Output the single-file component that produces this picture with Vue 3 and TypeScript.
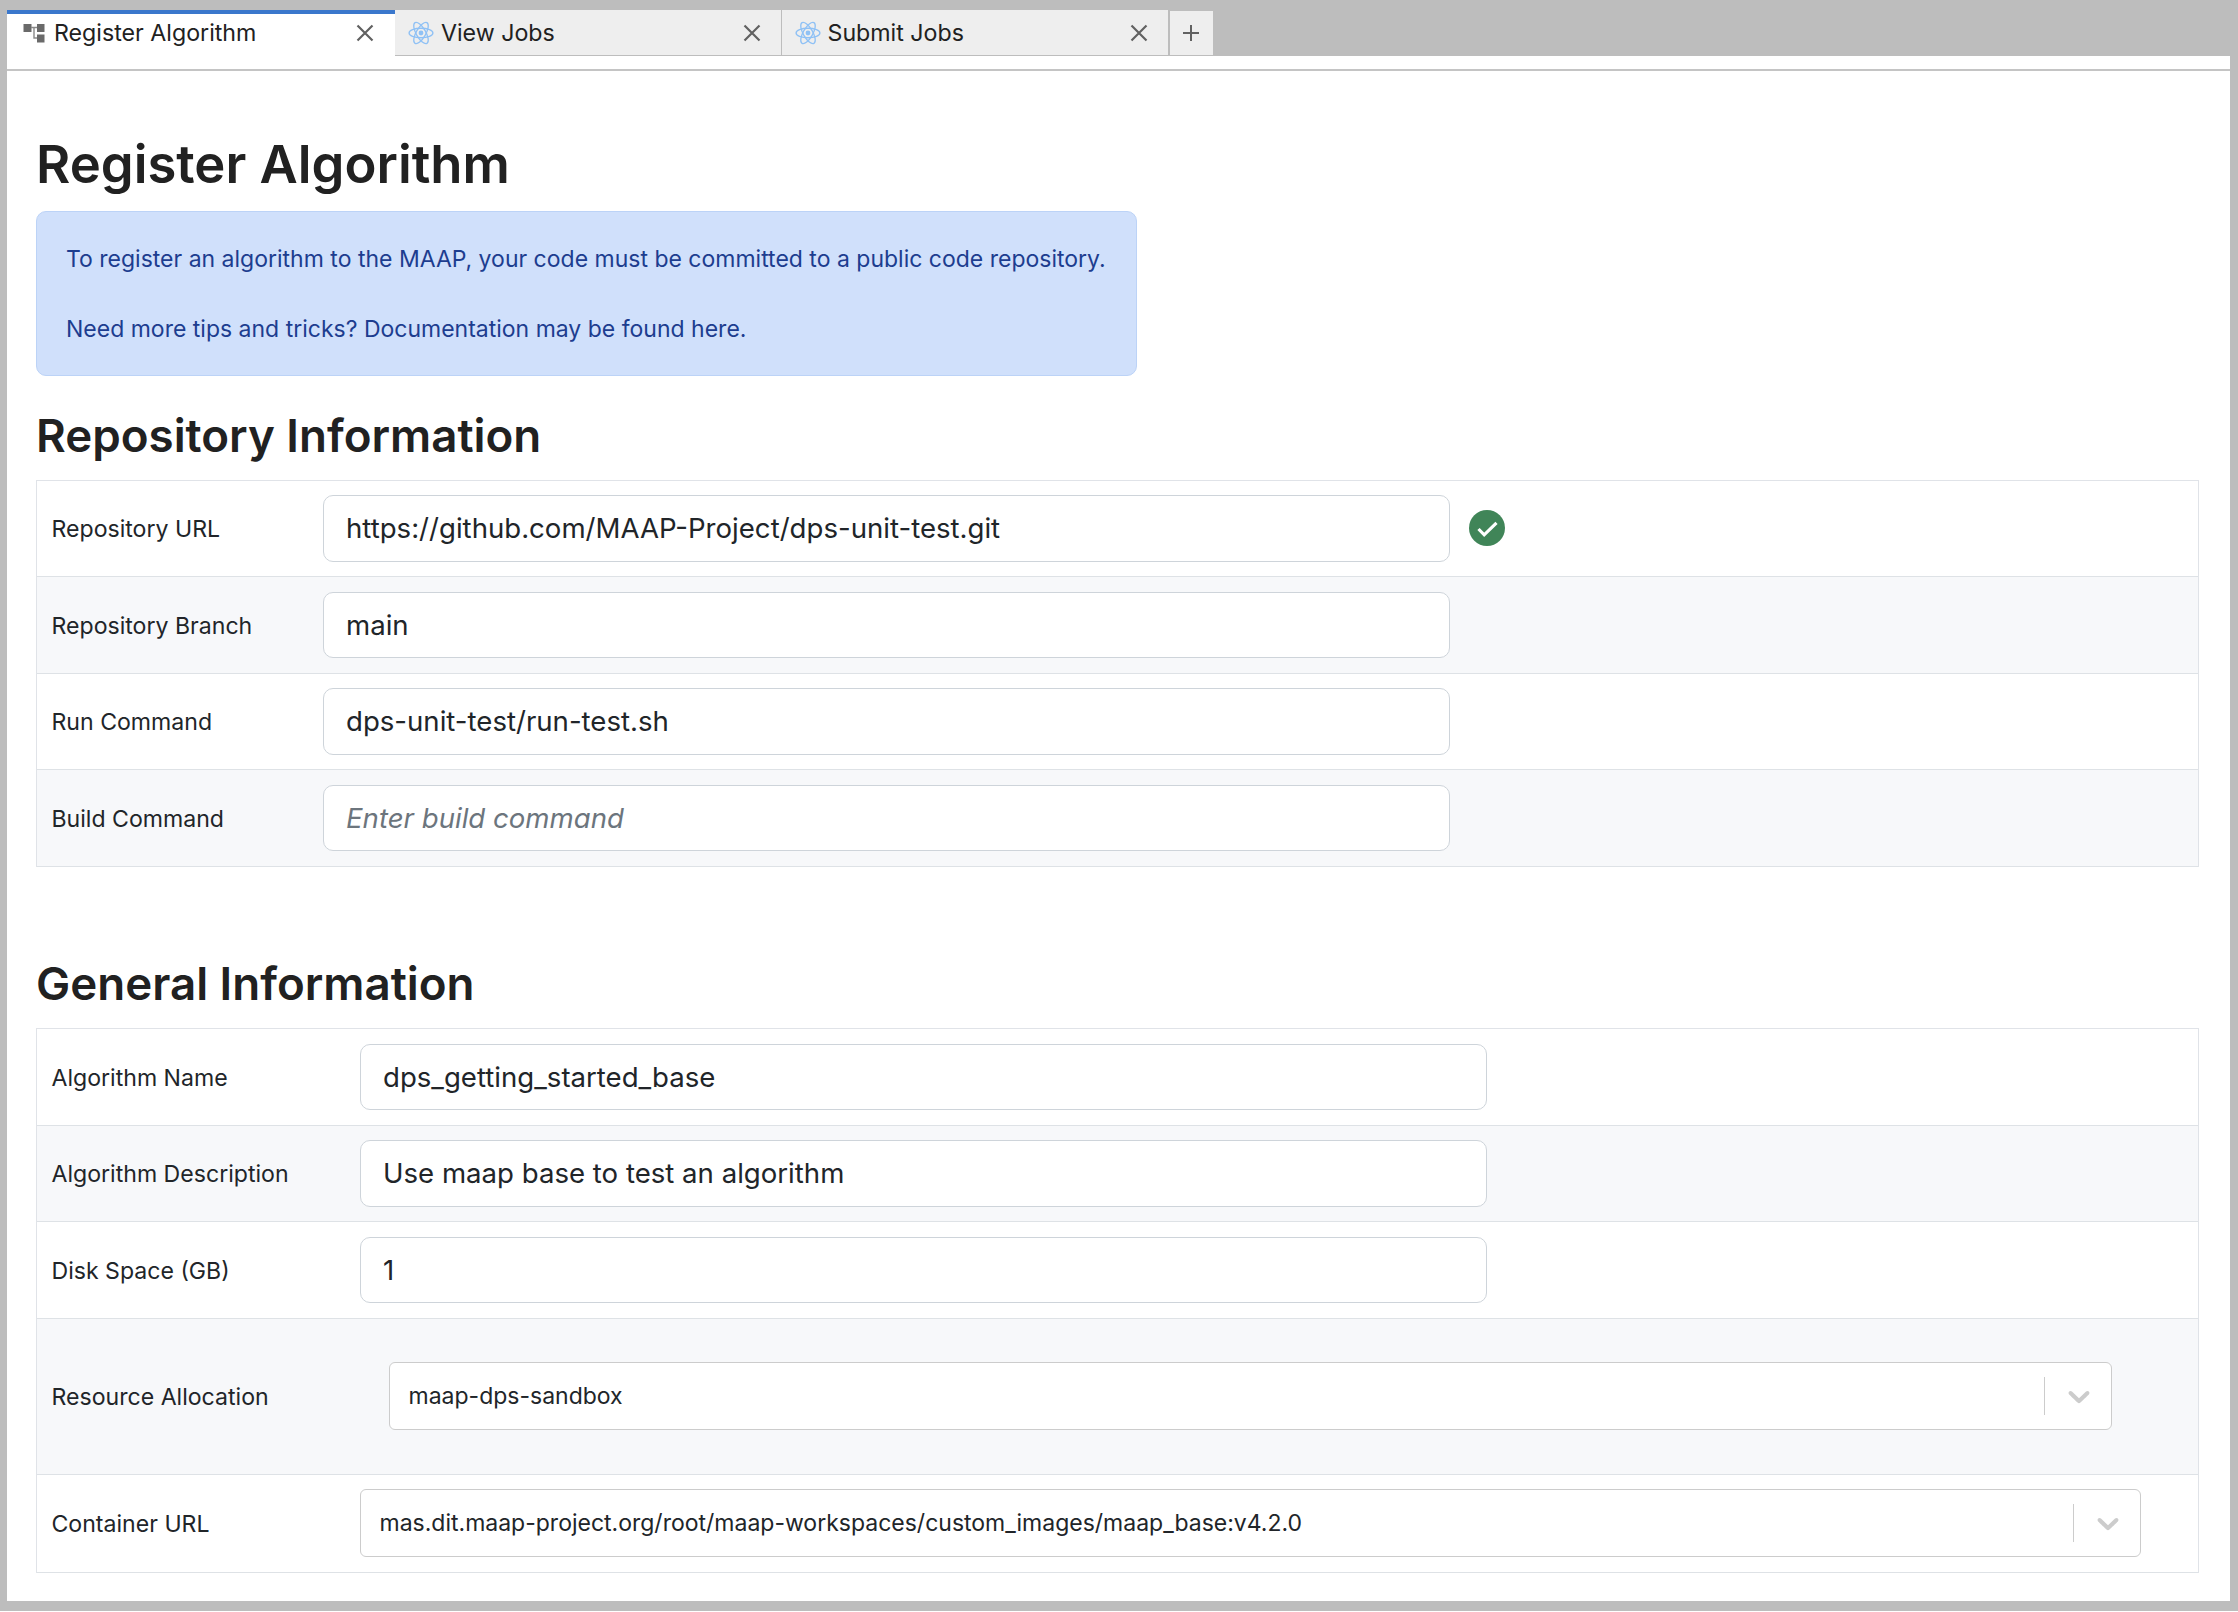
<template>
  <div class="app-shell">
    <div class="tabbar">
      <div v-for="tab in tabs" :key="tab.title" class="tab" :class="{ active: tab.active }">
        <svg v-if="tab.icon === 'tree'" class="tab-icon tree" viewBox="0 0 22 20">
          <rect x="0.5" y="1" width="8" height="8" fill="#6a6a6a" />
          <rect x="14" y="1" width="7.5" height="8" fill="#6a6a6a" />
          <rect x="14" y="11.5" width="7.5" height="8" fill="#6a6a6a" />
          <path d="M8 4.5h6M11 4.5v10.5h3" fill="none" stroke="#8a8a8a" stroke-width="1.4" />
        </svg>
        <svg v-else class="tab-icon atom" viewBox="0 0 24 24" fill="none" stroke="#8fc1f5" stroke-width="1.2">
          <ellipse cx="12" cy="12" rx="11" ry="4.4" />
          <ellipse cx="12" cy="12" rx="11" ry="4.4" transform="rotate(60 12 12)" />
          <ellipse cx="12" cy="12" rx="11" ry="4.4" transform="rotate(120 12 12)" />
          <circle cx="12" cy="12" r="2.2" fill="#8fc1f5" stroke="none" />
        </svg>
        <span class="tab-title">{{ tab.title }}</span>
        <svg class="tab-close" viewBox="0 0 18 18">
          <path d="M1.5 1.5l15 15M16.5 1.5l-15 15" stroke="#616161" stroke-width="2.2" fill="none" />
        </svg>
      </div>
      <div class="tab-add">
        <svg viewBox="0 0 18 18" width="18" height="18">
          <path d="M9 1v16M1 9h16" stroke="#616161" stroke-width="2" fill="none" />
        </svg>
      </div>
    </div>

    <div class="panel">
      <div class="toolbar"></div>
      <div class="content">
        <h1>Register Algorithm</h1>
        <div class="alert">
          <p>To register an algorithm to the MAAP, your code must be committed to a public code repository.</p>
          <p>Need more tips and tricks? Documentation may be found here.</p>
        </div>

        <h2 class="repo-head">Repository Information</h2>
        <div class="form-table repo">
          <div v-for="row in repoRows" :key="row.label" class="row">
            <div class="label">{{ row.label }}</div>
            <input class="text-input" readonly :value="row.value" :placeholder="row.placeholder" />
            <svg v-if="row.valid" class="valid-icon" viewBox="0 0 36 36">
              <circle cx="18" cy="18" r="18" fill="#408558" />
              <path d="M9.5 19l5.7 5.8L27.5 12.8" fill="none" stroke="#fff" stroke-width="3.2" />
            </svg>
          </div>
        </div>

        <h2 class="general-head">General Information</h2>
        <div class="form-table general">
          <div v-for="row in generalRows" :key="row.label" class="row">
            <div class="label">{{ row.label }}</div>
            <input class="text-input" readonly :value="row.value" />
          </div>
          <div class="row select-row resource">
            <div class="label">Resource Allocation</div>
            <div class="select-box">
              <span class="select-value">maap-dps-sandbox</span>
              <span class="select-sep"></span>
              <svg class="select-arrow" viewBox="0 0 20 20">
                <path fill="#cccccc" d="M4.516 7.548c0.436-0.446 1.043-0.481 1.576 0l3.908 3.747 3.908-3.747c0.533-0.481 1.141-0.446 1.574 0 0.436 0.445 0.408 1.197 0 1.615-0.406 0.418-4.695 4.502-4.695 4.502-0.217 0.223-0.502 0.335-0.787 0.335s-0.57-0.112-0.789-0.335c0 0-4.287-4.084-4.695-4.502s-0.436-1.17 0-1.615z" />
              </svg>
            </div>
          </div>
          <div class="row select-row container">
            <div class="label">Container URL</div>
            <div class="select-box">
              <span class="select-value">mas.dit.maap-project.org/root/maap-workspaces/custom_images/maap_base:v4.2.0</span>
              <span class="select-sep"></span>
              <svg class="select-arrow" viewBox="0 0 20 20">
                <path fill="#cccccc" d="M4.516 7.548c0.436-0.446 1.043-0.481 1.576 0l3.908 3.747 3.908-3.747c0.533-0.481 1.141-0.446 1.574 0 0.436 0.445 0.408 1.197 0 1.615-0.406 0.418-4.695 4.502-4.695 4.502-0.217 0.223-0.502 0.335-0.787 0.335s-0.57-0.112-0.789-0.335c0 0-4.287-4.084-4.695-4.502s-0.436-1.17 0-1.615z" />
              </svg>
            </div>
          </div>
        </div>
      </div>
    </div>
  </div>
</template>

<script setup lang="ts">
interface Tab {
  title: string
  icon: 'tree' | 'atom'
  active?: boolean
}

interface FormRow {
  label: string
  value: string
  placeholder?: string
  valid?: boolean
}

const tabs: Tab[] = [
  { title: 'Register Algorithm', icon: 'tree', active: true },
  { title: 'View Jobs', icon: 'atom' },
  { title: 'Submit Jobs', icon: 'atom' },
]

const repoRows: FormRow[] = [
  { label: 'Repository URL', value: 'https://github.com/MAAP-Project/dps-unit-test.git', valid: true },
  { label: 'Repository Branch', value: 'main' },
  { label: 'Run Command', value: 'dps-unit-test/run-test.sh' },
  { label: 'Build Command', value: '', placeholder: 'Enter build command' },
]

const generalRows: FormRow[] = [
  { label: 'Algorithm Name', value: 'dps_getting_started_base' },
  { label: 'Algorithm Description', value: 'Use maap base to test an algorithm' },
  { label: 'Disk Space (GB)', value: '1' },
]
</script>

<style>
html, body {
  margin: 0;
  background: #fff;
}
</style>

<style scoped>
.app-shell {
  width: 2238px;
  height: 1611px;
  box-sizing: border-box;
  padding: 10px 8px 10px 7px;
  background: #bdbdbd;
  display: flex;
  flex-direction: column;
  font-family: Inter, "Liberation Sans", sans-serif;
  color: #212529;
  overflow: hidden;
}

/* tabs */
.tabbar {
  display: flex;
  height: 46px;
  flex: none;
  align-items: flex-start;
}

.tab {
  width: 387.5px;
  height: 46px;
  box-sizing: border-box;
  flex: none;
  display: flex;
  align-items: center;
  background: #eeeeee;
  border-right: 1px solid #bdbdbd;
  border-bottom: 1px solid #bdbdbd;
  padding: 0 14px 0 13px;
  font-size: 23.2px;
  color: #212121;
}

.tab:nth-child(2) {
  width: 386.5px;
}

.tab.active {
  width: 388px;
  height: 46px;
  background: #fff;
  border-top: 4px solid #3a77cc;
  border-bottom: 0;
  border-right: 0;
  padding: 0 15px 4px 16px;
}

.tab-icon.tree {
  width: 22px;
  height: 20px;
  margin-right: 9px;
  margin-top: -1px;
}

.tab-icon.atom {
  width: 26px;
  height: 26px;
  margin-right: 7px;
}

.tab-title {
  flex: 1;
}

.tab-close {
  width: 18px;
  height: 18px;
  flex: none;
  margin-right: 6px;
}

.tab-add {
  width: 43px;
  height: 45px;
  margin-left: 1px;
  margin-top: 1px;
  box-sizing: border-box;
  background: #eeeeee;
  border-bottom: 1px solid #bdbdbd;
  display: flex;
  align-items: center;
  justify-content: center;
  padding-right: 2px;
}

/* main panel */
.panel {
  flex: 1;
  background: #fff;
  min-height: 0;
  display: flex;
  flex-direction: column;
}

.toolbar {
  height: 13px;
  flex: none;
  border-bottom: 2px solid #c4c4c4;
}

.content {
  padding: 0 31px 0 29px;
}

h1 {
  margin: 60px 0 13px;
  font-size: 52.6px;
  line-height: 67px;
  font-weight: 600;
  color: #212121;
}

h2 {
  font-size: 45.7px;
  line-height: 58px;
  font-weight: 600;
  margin: 0;
  color: #212121;
}

.alert {
  width: 1101px;
  height: 165px;
  box-sizing: border-box;
  padding: 30px 29px;
  background: #d0e0fb;
  border: 1px solid #bcd3f7;
  border-radius: 10px;
  color: #1d3d8f;
  font-size: 23px;
  line-height: 35px;
}

.alert p {
  margin: 0 0 35px;
}

.alert p:last-child {
  margin-bottom: 0;
}

.repo-head {
  margin-top: 30.5px;
  margin-bottom: 15px;
}

.general-head {
  margin-top: 88.5px;
  margin-bottom: 15px;
}

/* form tables */
.form-table {
  border: 1px solid #e0e3e8;
  border-bottom: 0;
}

.row {
  display: flex;
  align-items: center;
  box-sizing: border-box;
  height: 96.5px;
  border-bottom: 1px solid #dee2e6;
}

.row:nth-child(even) {
  background: #f7f8fa;
}

.label {
  box-sizing: border-box;
  padding-left: 14.5px;
  padding-top: 1.5px;
  font-size: 23.1px;
  flex: none;
}

.repo .label {
  width: 286px;
}

.general .label {
  width: 323px;
}

.text-input {
  width: 1127px;
  height: 66.5px;
  box-sizing: border-box;
  padding: 0 22px;
  border: 1.4px solid #ced4da;
  border-radius: 10px;
  background: #fff;
  font-family: inherit;
  font-size: 27.6px;
  color: #212529;
  outline: none;
}

.text-input::placeholder {
  color: #6c757d;
  font-style: italic;
  opacity: 1;
}

.valid-icon {
  width: 36px;
  height: 36px;
  margin-left: 19px;
}

/* react-select look */
.select-row.resource {
  height: 156px;
}

.select-row.container {
  height: 98px;
}

.select-box {
  height: 68px;
  box-sizing: border-box;
  flex: none;
  display: flex;
  align-items: center;
  background: #fff;
  border: 1.4px solid #cccccc;
  border-radius: 6px;
  padding-left: 18.5px;
  font-size: 23px;
}

.resource .select-box {
  width: 1723px;
  margin-left: 29px;
}

.container .select-box {
  width: 1781px;
}

.select-value {
  flex: 1;
}

.select-sep {
  width: 1.5px;
  height: 38px;
  background: #cccccc;
}

.select-arrow {
  width: 36px;
  height: 36px;
  margin: 0 14px 0 16px;
}
</style>
